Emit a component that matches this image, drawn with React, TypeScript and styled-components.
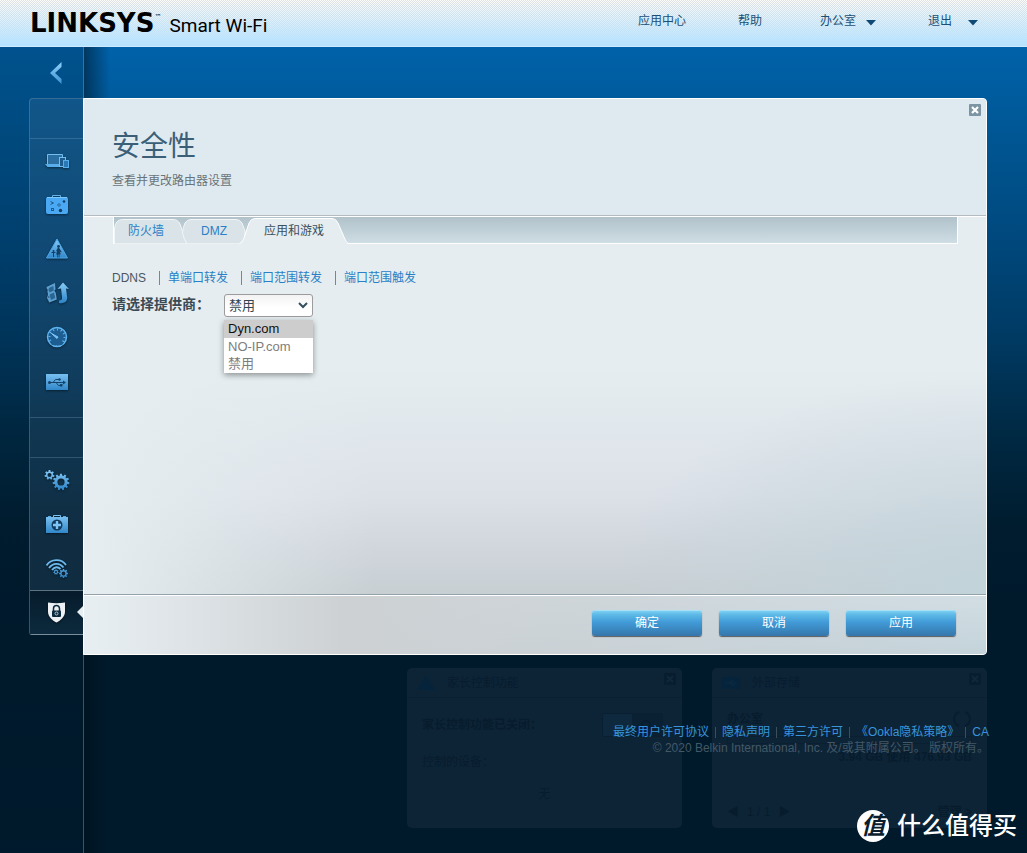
import React from "react";
import styled, { createGlobalStyle, css } from "styled-components";

const GlobalStyle = createGlobalStyle`
  * { box-sizing: border-box; }
  body {
    margin: 0;
    background: #001a2c;
    color: #40535f;
    font: 12px/16px "Liberation Sans", "Noto Sans CJK SC", sans-serif;
  }
  ul { list-style: none; margin: 0; padding: 0; }
  h1, h2, p { margin: 0; }
  button, select { font: inherit; color: inherit; }
  a { color: inherit; text-decoration: none; }
`;

/* ---------- page frame ---------- */

const Page = styled.div`
  position: relative;
  display: flex;
  flex-direction: column;
  min-height: 100vh;
  overflow: hidden;
`;

const Header = styled.header`
  display: flex;
  align-items: flex-start;
  justify-content: space-between;
  height: 47px;
  padding: 0 49px 0 30px;
  border-bottom: 1px solid #cdeaff;
  background:
    linear-gradient(rgba(184, 227, 255, 0), #b8e3ff 44px),
    repeating-conic-gradient(#dfe2e3 0 25%, #fdfdfb 0 50%) 0 0 / 2px 2px;
`;

const Brand = styled.div`
  display: flex;
  align-items: baseline;
  padding-top: 8px;
  color: #000;
`;

const Wordmark = styled.span`
  font: bold 26px/30px "DejaVu Sans", sans-serif;
`;

const Trademark = styled.sup`
  align-self: flex-start;
  font: 7px/18px "DejaVu Sans", sans-serif;
`;

const ProductName = styled.span`
  margin-left: 8px;
  font: 19px/30px Roboto, sans-serif;
`;

const HeaderNav = styled.nav`
  display: flex;
  gap: 58px;
  padding-top: 13px;
  color: #1b4f74;
`;

const HeaderGroup = styled.div`
  display: flex;
  gap: 52px;
`;

const HeaderMenu = styled.button`
  display: flex;
  align-items: center;
  gap: 10px;
  padding: 0;
  border: 0;
  background: none;
  text-align: left;

  span { min-width: 30px; }
  svg { margin-top: 3px; }
`;

const Shell = styled.div`
  display: flex;
  flex: 1;
  background: linear-gradient(
    #0062aa 0,
    #005693 90px,
    #004a80 180px,
    #003a63 290px,
    #002a45 380px,
    #001c2e 480px,
    #001a2c 560px
  );
`;

/* ---------- sidebar ---------- */

const Sidebar = styled.aside`
  flex: 0 0 84px;
  padding-left: 29px;
  border-right: 1px solid rgba(110, 160, 200, 0.45);
  background: linear-gradient(rgba(0, 25, 45, 0.22), rgba(0, 25, 45, 0.1));
`;

const BackButton = styled.button`
  display: flex;
  align-items: center;
  justify-content: center;
  width: 100%;
  height: 51px;
  padding: 0;
  border: 0;
  background: none;
`;

const Menu = styled.nav`
  border: 1px solid rgba(120, 165, 195, 0.35);
  border-right: 0;
  border-bottom: 1px solid #7a8d9a;
  border-radius: 4px 0 0 3px;
  background: linear-gradient(rgba(60, 110, 150, 0.28), rgba(50, 85, 110, 0.3));
`;

const MenuBlank = styled.div`
  height: 39px;
`;

const MenuGroup = styled.ul`
  padding-bottom: 14px;
  border-top: 1px solid rgba(120, 165, 195, 0.3);
  border-bottom: 1px solid rgba(120, 165, 195, 0.3);

  &:last-child { padding-bottom: 0; border-bottom: 0; }
`;

const MenuItem = styled.li<{ $active?: boolean }>`
  position: relative;
  height: 44px;

  ${(p) =>
    p.$active &&
    css`
      border-top: 1px solid #5d7482;
      background: linear-gradient(#061b2b, #0c2a3e);

      &::after {
        content: "";
        position: absolute;
        top: 15px;
        right: 0;
        border: solid transparent;
        border-width: 6px 6px 6px 0;
        border-right-color: #e8eff2;
      }
    `}
`;

const MenuLink = styled.a`
  display: flex;
  align-items: center;
  height: 42px;
  padding-left: 14px;

  svg { filter: drop-shadow(0 1px 1px rgba(0, 0, 0, 0.45)); }
`;

/* ---------- panel ---------- */

const Main = styled.main`
  flex: 1;
  min-width: 0;
  padding: 51px 40px 25px 0;
  background: linear-gradient(to right, rgba(0, 15, 25, 0.5), rgba(0, 15, 25, 0) 26px);
`;

const Panel = styled.section`
  position: relative;
  margin-left: -1px;
  border: 1px solid #fff;
  border-radius: 0 4px 4px 0;
  background: #e5edf0;
`;

const PanelHead = styled.header`
  position: relative;
  padding: 30px 28px 25px;
  border-bottom: 1px solid #b4bcc0;
  border-radius: 0 3px 0 0;
  background: #dfeaf0;
`;

const Title = styled.h1`
  color: #3c5f78;
  font-size: 28px;
  font-weight: 400;
  line-height: 36px;
`;

const Subtitle = styled.p`
  margin-top: 7px;
  color: #6a7478;
  line-height: 18px;
`;

const CloseButton = styled.button`
  position: absolute;
  top: 5px;
  right: 5px;
  display: flex;
  padding: 0;
  border: 0;
  background: none;
`;

const PanelBody = styled.div`
  min-height: 378px;
  padding: 0 28px;
  border-top: 1px solid #fff;
  background:
    linear-gradient(to right, #e5edf0 10px, rgba(229, 237, 240, 0) 290px),
    radial-gradient(ellipse 380px 220px at 100% 100%, #c2d3da, rgba(194, 211, 218, 0)),
    linear-gradient(#e5edf0 40%, #e1e8ed 56%, #dce1e8 74%, #d0d6dc 88%, #c8cfd3);
`;

const TabBar = styled.div`
  display: flex;
  height: 27px;
  margin-left: 1px;
  border: solid #fff;
  border-width: 0 1px 1px;
  background: linear-gradient(#b1c2ca, #cfdde4);
`;

const Tab = styled.button<{ $width: number; $overlap: number; $indent: number; $active?: boolean }>`
  position: relative;
  z-index: ${(p) => (p.$active ? 1 : 0)};
  width: ${(p) => p.$width}px;
  height: 27px;
  margin-left: -${(p) => p.$overlap}px;
  padding: 0 0 0 ${(p) => p.$indent}px;
  border: 0;
  background: none;
  color: ${(p) => (p.$active ? "#3c4f5c" : "#2a80c6")};
  text-align: left;

  svg { position: absolute; inset: 0; }
  span { position: relative; }
`;

const SubNav = styled.ul`
  display: flex;
  margin-top: 27px;
  line-height: 14px;
  color: #2a80c6;

  li + li {
    margin-left: 13px;
    padding-left: 8px;
    border-left: 1px solid #7b868c;
  }
`;

const CurrentLink = styled.a`
  color: #4a5660;
`;

const Field = styled.div`
  display: flex;
  align-items: flex-start;
  margin-top: 9px;
`;

const FieldLabel = styled.label`
  width: 112px;
  color: #3a4a55;
  font-size: 14px;
  font-weight: bold;
  line-height: 20px;
`;

const SelectBox = styled.div`
  position: relative;
  width: 89px;

  > svg {
    position: absolute;
    top: 8px;
    right: 5px;
    pointer-events: none;
  }
`;

const Select = styled.select`
  display: block;
  width: 100%;
  height: 23px;
  padding: 0 0 0 4px;
  border: 1px solid #9c9c9c;
  border-radius: 3px;
  appearance: none;
  background: linear-gradient(#f3f3f3, #fff 60%);
  color: #32444f;
  font-size: 13px;
`;

const OptionList = styled.ul`
  position: absolute;
  top: 26px;
  left: 0;
  right: 0;
  z-index: 2;
  background: #fff;
  box-shadow: 0 2px 6px rgba(0, 0, 0, 0.4);
  color: #7d7d7d;
  font-size: 13px;
  line-height: 17px;
`;

const Option = styled.li<{ $highlighted?: boolean }>`
  padding-left: 4px;
  ${(p) => p.$highlighted && "background: #cdcdcd; color: #111; line-height: 18px;"}

  &:last-child { line-height: 18px; }
`;

const PanelFoot = styled.footer`
  display: flex;
  justify-content: flex-end;
  gap: 17px;
  padding: 15px 30px 18px;
  border-top: 1px solid #93a1aa;
  border-radius: 0 0 3px 0;
  box-shadow: inset 0 1px #fff;
  background:
    linear-gradient(to right, #e7eef1 10px, rgba(231, 238, 241, 0) 260px),
    linear-gradient(to right, #cdd1d4 30%, rgba(205, 209, 212, 0)),
    linear-gradient(#d2dee4, #c4d3da);
`;

const ActionButton = styled.button`
  width: 110px;
  height: 26px;
  padding: 0;
  border: 0;
  border-radius: 3px;
  background: linear-gradient(#84d4f4 0, #5cb8e6 5px, #429bd8 12px, #3576ab);
  box-shadow: inset 0 1px #a5e1f8, 0 1px 1px #5d5a5c;
  color: #fff;
`;

/* ---------- dimmed dashboard ---------- */

const Dashboard = styled.div`
  position: relative;
  display: flex;
  justify-content: flex-end;
  gap: 30px;
  margin-top: 13px;
`;

const Widget = styled.section`
  width: 275px;
  height: 160px;
  border-radius: 5px;
  background: #0d2437;
  color: #071c2d;
`;

const WidgetHead = styled.header`
  display: flex;
  align-items: center;
  height: 30px;
  padding: 0 6px 0 10px;
  border-bottom: 1px solid #0a1f31;

  h2 {
    flex: 1;
    margin-left: 12px;
    font-size: 12px;
    font-weight: 400;
  }

  > :last-child { align-self: flex-start; margin-top: 5px; }
`;

const WidgetRow = styled.div<{ $bold?: boolean; $center?: boolean }>`
  display: flex;
  align-items: center;
  justify-content: ${(p) => (p.$center ? "center" : "space-between")};
  padding: 0 15px;
  font-weight: ${(p) => (p.$bold ? "bold" : "normal")};
  line-height: 14px;
`;

const ParentalBody = styled.div`
  display: grid;
  gap: 18px;
  padding: 15px 0;
`;

const StorageBody = styled.div`
  display: grid;
  grid-template-rows: 30px 12px 22px 1fr;
  height: 130px;
  padding: 6px 0 9px;

  > :last-child { align-items: flex-end; }
`;

const Switch = styled.span`
  display: flex;
  justify-content: flex-end;
  width: 61px;
  height: 24px;
  margin-right: 4px;
  border: 1px solid #0a2032;
  border-radius: 2px;
  background: linear-gradient(to right, #0e293d 29px, #0a2134 29px);
`;

const Meter = styled.span`
  width: 100%;
  height: 8px;
  border: 1px solid #0a2032;
`;

const Pager = styled.span`
  display: flex;
  gap: 8px;
`;

const Legal = styled.footer`
  position: absolute;
  top: 56px;
  right: -2px;
  text-align: right;
  color: #435866;
`;

const LegalLinks = styled.ul`
  display: flex;
  justify-content: flex-end;
  color: #3794dc;

  li { display: flex; }
  li + li::before {
    content: "";
    width: 1px;
    height: 11px;
    margin: 3px 6px 0;
    background: #3c4f5d;
  }
`;

const Watermark = styled.div`
  position: absolute;
  right: 10px;
  bottom: 11px;
  display: flex;
  align-items: center;
  gap: 8px;
  color: #fff;
  font-size: 24px;
  font-weight: 500;
  line-height: 32px;
`;

const Seal = styled.span`
  width: 32px;
  height: 32px;
  border-radius: 50%;
  background: #fff;
  color: #0a1e2e;
  font-size: 24px;
  font-style: italic;
  font-weight: bold;
  line-height: 31px;
  text-align: center;
`;

/* ---------- drawings ---------- */

const Icon = ({ children }: { children: React.ReactNode }) => (
  <svg width="26" height="26" viewBox="0 0 26 26" fill="none" aria-hidden="true">
    <defs>
      <linearGradient id="sky" x1="0" y1="0" x2="0" y2="26" gradientUnits="userSpaceOnUse">
        <stop offset="0.15" stopColor="#86caf8" />
        <stop offset="0.9" stopColor="#2f86c8" />
      </linearGradient>
    </defs>
    {children}
  </svg>
);

const gearPath = (cx: number, cy: number, outer: number, inner: number, teeth: number) => {
  const points: string[] = [];
  const step = (Math.PI * 2) / teeth;
  for (let i = 0; i < teeth; i++) {
    const a = i * step - Math.PI / 2;
    [
      [-0.3, inner],
      [-0.2, outer],
      [0.2, outer],
      [0.3, inner],
    ].forEach(([t, r]) => {
      points.push(`${(cx + Math.cos(a + t * step) * r).toFixed(2)} ${(cy + Math.sin(a + t * step) * r).toFixed(2)}`);
    });
  }
  return `M${points.join("L")}Z`;
};

const Gear = ({ cx, cy, outer, inner, hole, teeth }: Record<"cx" | "cy" | "outer" | "inner" | "hole" | "teeth", number>) => (
  <path
    fill="url(#sky)"
    fillRule="evenodd"
    d={`${gearPath(cx, cy, outer, inner, teeth)}M${cx - hole} ${cy}a${hole} ${hole} 0 1 0 ${hole * 2} 0a${hole} ${hole} 0 1 0 ${-hole * 2} 0Z`}
  />
);

const DevicesIcon = () => (
  <Icon>
    <path d="M3.500 17V7.500H18.500V10" stroke="#74bdf0" />
    <path d="M4 8h14v3h-3v6H4z" fill="#2b6ea2" />
    <path d="M1 17h14v3H3.500z" fill="#58aeea" />
    <rect x="15.500" y="10.500" width="6" height="9" fill="#1d5c8e" stroke="#74bdf0" />
    <rect x="19.500" y="13.500" width="5" height="7" fill="#2b78b4" stroke="#58aeea" />
  </Icon>
);

const MapIcon = () => (
  <Icon>
    <path d="M8.500 6V4.500h8V6" stroke="#64b2ea" />
    <rect x="2" y="6" width="22" height="17" rx="2" fill="#4aa9f2" />
    <path d="M3 6.500h20" stroke="#7cc6fa" />
    <g stroke="#1b5c90" fill="none">
      <path d="M6.500 10.500l3 1.500-3 1.500" />
      <path d="M13.500 14l1.500-1.500 1.500 1.500-1.500 1.500z" />
      <rect x="7.500" y="17.500" width="2" height="2" />
    </g>
    <circle cx="20" cy="10.500" r="1.300" fill="#0f3d66" />
    <circle cx="16.500" cy="19.500" r="1.700" fill="#0f3d66" />
  </Icon>
);

const FamilyIcon = () => (
  <Icon>
    <path d="M13 4L23.500 23h-21z" fill="url(#sky)" stroke="#4aa6ea" strokeLinejoin="round" />
    <g fill="#123f66">
      <circle cx="14.500" cy="11.500" r="1.400" />
      <path d="M13.800 13h1.400l2.500 4-.8.500-1.200-1.500 1 3.500h-1.200v3h-.8v-3h-.6v3h-.8v-3h-1.200l1-4-1.500 1z" />
      <circle cx="9.500" cy="16" r="1" />
      <path d="M7.500 17h4v1H10v4H9v-4H7.500z" />
    </g>
  </Icon>
);

const MediaIcon = () => (
  <Icon>
    <path d="M2.500 8l8.500-4 .5 6.500-1.200 1 1.500 2.500 1 6.500-7.500 3L3 19l1-3.500z" fill="#5d9fce" />
    <path d="M4.800 9l4.500-2 .5 4.500-4.500 2zM5.500 15.500l4.500-2 1.200 5.500-4.200 2z" fill="#2a6594" />
    <path d="M3 11h1.500M4 18h1.500" stroke="#123f66" />
    <path d="M15 24c6.500 1 9-2.500 8-7l-1-7.500 3 .5L19 3.500 13.500 10l3.500-.5 1 8c.5 3-.5 4-3 4z" fill="url(#sky)" />
  </Icon>
);

const GaugeIcon = () => (
  <Icon>
    <circle cx="13" cy="14" r="9.500" fill="#1d5e92" stroke="#5db4f2" strokeWidth="1.500" />
    <circle cx="13" cy="14" r="7.500" stroke="#6cb9ee" strokeDasharray="1 2.900" strokeWidth="2" />
    <path d="M6 19h14l-2 3H8z" fill="#1d5e92" />
    <path d="M7.500 10.500l6.500 3.500-1 1.500z" fill="#7cc4f5" stroke="#7cc4f5" />
  </Icon>
);

const UsbIcon = () => (
  <Icon>
    <rect x="2" y="7" width="22" height="16" fill="url(#sky)" />
    <path d="M5 15.500h15M9 15.500l2.500-3H15M12 15.500l2.500 3H17" stroke="#15436a" />
    <circle cx="5.500" cy="15.500" r="1.500" fill="#15436a" />
    <circle cx="15.500" cy="12.500" r="1.200" fill="#15436a" />
    <rect x="16" y="17" width="2.500" height="2.500" fill="#15436a" />
    <path d="M19 13.500l3 2-3 2z" fill="#15436a" />
  </Icon>
);

const GearsIcon = () => (
  <Icon>
    <Gear cx={5.5} cy={9} outer={5} inner={3.6} hole={2} teeth={7} />
    <Gear cx={17} cy={16} outer={8.4} inner={6.6} hole={3.6} teeth={11} />
  </Icon>
);

const MedkitIcon = () => (
  <Icon>
    <path d="M9.500 7V5.500h7V7" stroke="#7cc4f5" />
    <path d="M4 6.500h3M19 6.500h3" stroke="#5aaae2" />
    <rect x="2" y="7" width="22" height="16" fill="url(#sky)" />
    <circle cx="13" cy="15" r="5.500" fill="#12395a" />
    <path d="M13 11v8M9 15h8" stroke="#7cc4f5" strokeWidth="2.400" />
  </Icon>
);

const WifiIcon = () => (
  <Icon>
    <g stroke="#6cb9ee" strokeWidth="1.800">
      <path d="M2.500 11.500C7 4.500 17.500 4.500 22 11" />
      <path d="M5 14C9 8.500 15.500 8.500 19.500 13.500" />
      <path d="M8 16c2.500-3.500 6-3.500 8.500-1" />
    </g>
    <Gear cx={12} cy={18} outer={2.8} inner={2} hole={1} teeth={7} />
    <Gear cx={19.5} cy={19.5} outer={4.6} inner={3.4} hole={1.9} teeth={8} />
  </Icon>
);

const ShieldIcon = () => (
  <Icon>
    <path d="M4 3.500c6 1 11 1 17 0v9c0 5.500-4.500 9-8.500 11C8.500 21.500 4 18 4 12.500z" fill="#eef1f3" />
    <path d="M9.500 12V9.500a3 3 0 0 1 6 0V12" stroke="#0c2a3e" strokeWidth="1.500" />
    <rect x="8" y="11.500" width="9" height="6.500" rx="1" fill="#0c2a3e" />
    <circle cx="12.500" cy="14.500" r="1.500" stroke="#b9c4cb" />
  </Icon>
);

const CloseIcon = ({ bg = "#7d95a3", fg = "#fff" }: { bg?: string; fg?: string }) => (
  <svg width="12" height="12" viewBox="0 0 12 12" aria-hidden="true">
    <rect width="12" height="12" rx="1" fill={bg} />
    <path d="M3 3l6 6M9 3l-6 6" stroke={fg} strokeWidth="2.200" />
  </svg>
);

const CaretDown = () => (
  <svg width="10" height="6" viewBox="0 0 10 6" aria-hidden="true">
    <path d="M0 0h10L5 5.500z" fill="#0f4a76" />
  </svg>
);

const TabShape = ({ width, d, active }: { width: number; d: string; active?: boolean }) => (
  <svg width={width} height="27" viewBox={`0 0 ${width} 27`} aria-hidden="true">
    <path d={d} fill={active ? "#e5edf0" : "#d9e3e8"} stroke={active ? "#fff" : "#f1f6f8"} />
    {active && <path d={`M2 26.500h${width - 4}`} stroke="#e5edf0" />}
  </svg>
);

/* ---------- data ---------- */

const deviceLinks = [
  { label: "设备列表", icon: <DevicesIcon /> },
  { label: "网络图", icon: <MapIcon /> },
  { label: "家长控制功能", icon: <FamilyIcon /> },
  { label: "媒体优先级", icon: <MediaIcon /> },
  { label: "速度测试", icon: <GaugeIcon /> },
  { label: "外部存储", icon: <UsbIcon /> },
];

const settingLinks = [
  { label: "连接", icon: <GearsIcon /> },
  { label: "故障排除", icon: <MedkitIcon /> },
  { label: "无线", icon: <WifiIcon /> },
  { label: "安全性", icon: <ShieldIcon />, active: true },
];

const tabs = [
  { label: "防火墙", width: 73, overlap: 0, indent: 14, d: "M.5 26.500V12Q1 2.500 9 2.500H59Q64 2.500 66 7L70 19Q71 24 73 26.500" },
  { label: "DMZ", width: 65, overlap: 5, indent: 19, d: "M5 26.500Q2 23 .5 16Q1 10 3 6Q5 2.500 9 2.500H54Q58 2.500 60 6L63 14V26.500" },
  {
    label: "应用和游戏",
    width: 110,
    overlap: 8,
    indent: 25,
    active: true,
    d: "M.5 26.500Q3 26 5 21L10 6Q12 1.500 16 1.500H93Q97 1.500 99 6L105 20Q107 26 109.500 26.500",
  },
];

const legalLinks = ["最终用户许可协议", "隐私声明", "第三方许可", "《Ookla隐私策略》", "CA"];

const MenuLinks = ({ items }: { items: { label: string; icon: React.ReactNode; active?: boolean }[] }) => (
  <MenuGroup>
    {items.map((item) => (
      <MenuItem key={item.label} $active={item.active}>
        <MenuLink href="#" aria-label={item.label}>
          {item.icon}
        </MenuLink>
      </MenuItem>
    ))}
  </MenuGroup>
);

export default function App() {
  return (
    <Page>
      <GlobalStyle />
      <Header>
        <Brand>
          <Wordmark>LINKSYS</Wordmark>
          <Trademark>™</Trademark>
          <ProductName>Smart Wi-Fi</ProductName>
        </Brand>
        <HeaderNav>
          <HeaderGroup>
            <a href="#">应用中心</a>
            <a href="#">帮助</a>
          </HeaderGroup>
          <HeaderGroup>
            <HeaderMenu type="button">
              <span>办公室</span>
              <CaretDown />
            </HeaderMenu>
            <HeaderMenu type="button">
              <span>退出</span>
              <CaretDown />
            </HeaderMenu>
          </HeaderGroup>
        </HeaderNav>
      </Header>

      <Shell>
        <Sidebar>
          <BackButton type="button" aria-label="返回">
            <svg width="12" height="22" viewBox="0 0 12 22" aria-hidden="true">
              <defs>
                <linearGradient id="back" x1="0" y1="0" x2="0" y2="1">
                  <stop offset="0" stopColor="#8fd0fa" />
                  <stop offset="1" stopColor="#3c93d3" />
                </linearGradient>
              </defs>
              <path d="M11.500 0v5L5 11l6.500 6v5L0 11z" fill="url(#back)" />
            </svg>
          </BackButton>
          <Menu>
            <MenuBlank />
            <MenuLinks items={deviceLinks} />
            <MenuBlank />
            <MenuLinks items={settingLinks} />
          </Menu>
        </Sidebar>

        <Main>
          <Panel>
            <PanelHead>
              <Title>安全性</Title>
              <Subtitle>查看并更改路由器设置</Subtitle>
              <CloseButton type="button" aria-label="关闭">
                <CloseIcon />
              </CloseButton>
            </PanelHead>
            <PanelBody>
              <TabBar role="tablist">
                {tabs.map((tab) => (
                  <Tab
                    key={tab.label}
                    type="button"
                    role="tab"
                    aria-selected={!!tab.active}
                    $width={tab.width}
                    $overlap={tab.overlap}
                    $indent={tab.indent}
                    $active={tab.active}
                  >
                    <TabShape width={tab.width} d={tab.d} active={tab.active} />
                    <span>{tab.label}</span>
                  </Tab>
                ))}
              </TabBar>
              <SubNav>
                <li><CurrentLink href="#">DDNS</CurrentLink></li>
                <li><a href="#">单端口转发</a></li>
                <li><a href="#">端口范围转发</a></li>
                <li><a href="#">端口范围触发</a></li>
              </SubNav>
              <Field>
                <FieldLabel htmlFor="provider">请选择提供商：</FieldLabel>
                <SelectBox>
                  <Select id="provider" defaultValue="禁用">
                    <option>Dyn.com</option>
                    <option>NO-IP.com</option>
                    <option>禁用</option>
                  </Select>
                  <svg width="10" height="7" viewBox="0 0 10 7" fill="none" aria-hidden="true">
                    <path d="M1 1l4 4 4-4" stroke="#32505f" strokeWidth="2" />
                  </svg>
                  <OptionList role="listbox" aria-label="提供商">
                    <Option role="option" aria-selected="true" $highlighted>Dyn.com</Option>
                    <Option role="option" aria-selected="false">NO-IP.com</Option>
                    <Option role="option" aria-selected="false">禁用</Option>
                  </OptionList>
                </SelectBox>
              </Field>
            </PanelBody>
            <PanelFoot>
              <ActionButton type="button">确定</ActionButton>
              <ActionButton type="button">取消</ActionButton>
              <ActionButton type="button">应用</ActionButton>
            </PanelFoot>
          </Panel>

          <Dashboard>
            <Widget>
              <WidgetHead>
                <svg width="18" height="16" viewBox="0 0 18 16" aria-hidden="true">
                  <path d="M9 1l9 14H0z" fill="#05233a" />
                </svg>
                <h2>家长控制功能</h2>
                <CloseIcon bg="#081d2e" fg="#0f283b" />
              </WidgetHead>
              <ParentalBody>
                <WidgetRow $bold>
                  家长控制功能已关闭：
                  <Switch>
                    <svg width="30" height="22" viewBox="0 0 30 22" fill="none" aria-hidden="true">
                      <circle cx="14" cy="11" r="4" stroke="#071c2d" strokeWidth="2" />
                    </svg>
                  </Switch>
                </WidgetRow>
                <WidgetRow>控制的设备：</WidgetRow>
                <WidgetRow $center>无</WidgetRow>
              </ParentalBody>
            </Widget>
            <Widget>
              <WidgetHead>
                <svg width="18" height="12" viewBox="0 0 18 12" fill="none" aria-hidden="true">
                  <path d="M0 0h18v12H0z" fill="#05233a" />
                  <path d="M3 6h12M7 6l2-2h3M8 6l2 2h3" stroke="#0d2b41" />
                </svg>
                <h2>外部存储</h2>
                <CloseIcon bg="#081d2e" fg="#0f283b" />
              </WidgetHead>
              <StorageBody>
                <WidgetRow $bold>
                  办公室
                  <svg width="20" height="20" viewBox="0 0 20 20" fill="none" aria-hidden="true">
                    <path d="M7 3a7.500 7.500 0 0 0 0 14M13 3a7.500 7.500 0 0 1 0 14" stroke="#081d2e" strokeWidth="2" />
                  </svg>
                </WidgetRow>
                <WidgetRow><Meter /></WidgetRow>
                <WidgetRow $bold><span />3.94 GB 使用 476.93 GB</WidgetRow>
                <WidgetRow>
                  <Pager>
                    <span>◀</span>
                    <span>1 / 1</span>
                    <span>▶</span>
                  </Pager>
                  <strong>管理 &gt;</strong>
                </WidgetRow>
              </StorageBody>
            </Widget>
            <Legal>
              <LegalLinks>
                {legalLinks.map((label) => (
                  <li key={label}><a href="#">{label}</a></li>
                ))}
              </LegalLinks>
              <p>© 2020 Belkin International, Inc. 及/或其附属公司。 版权所有。</p>
            </Legal>
          </Dashboard>
        </Main>
      </Shell>

      <Watermark>
        <Seal>值</Seal>
        什么值得买
      </Watermark>
    </Page>
  );
}
